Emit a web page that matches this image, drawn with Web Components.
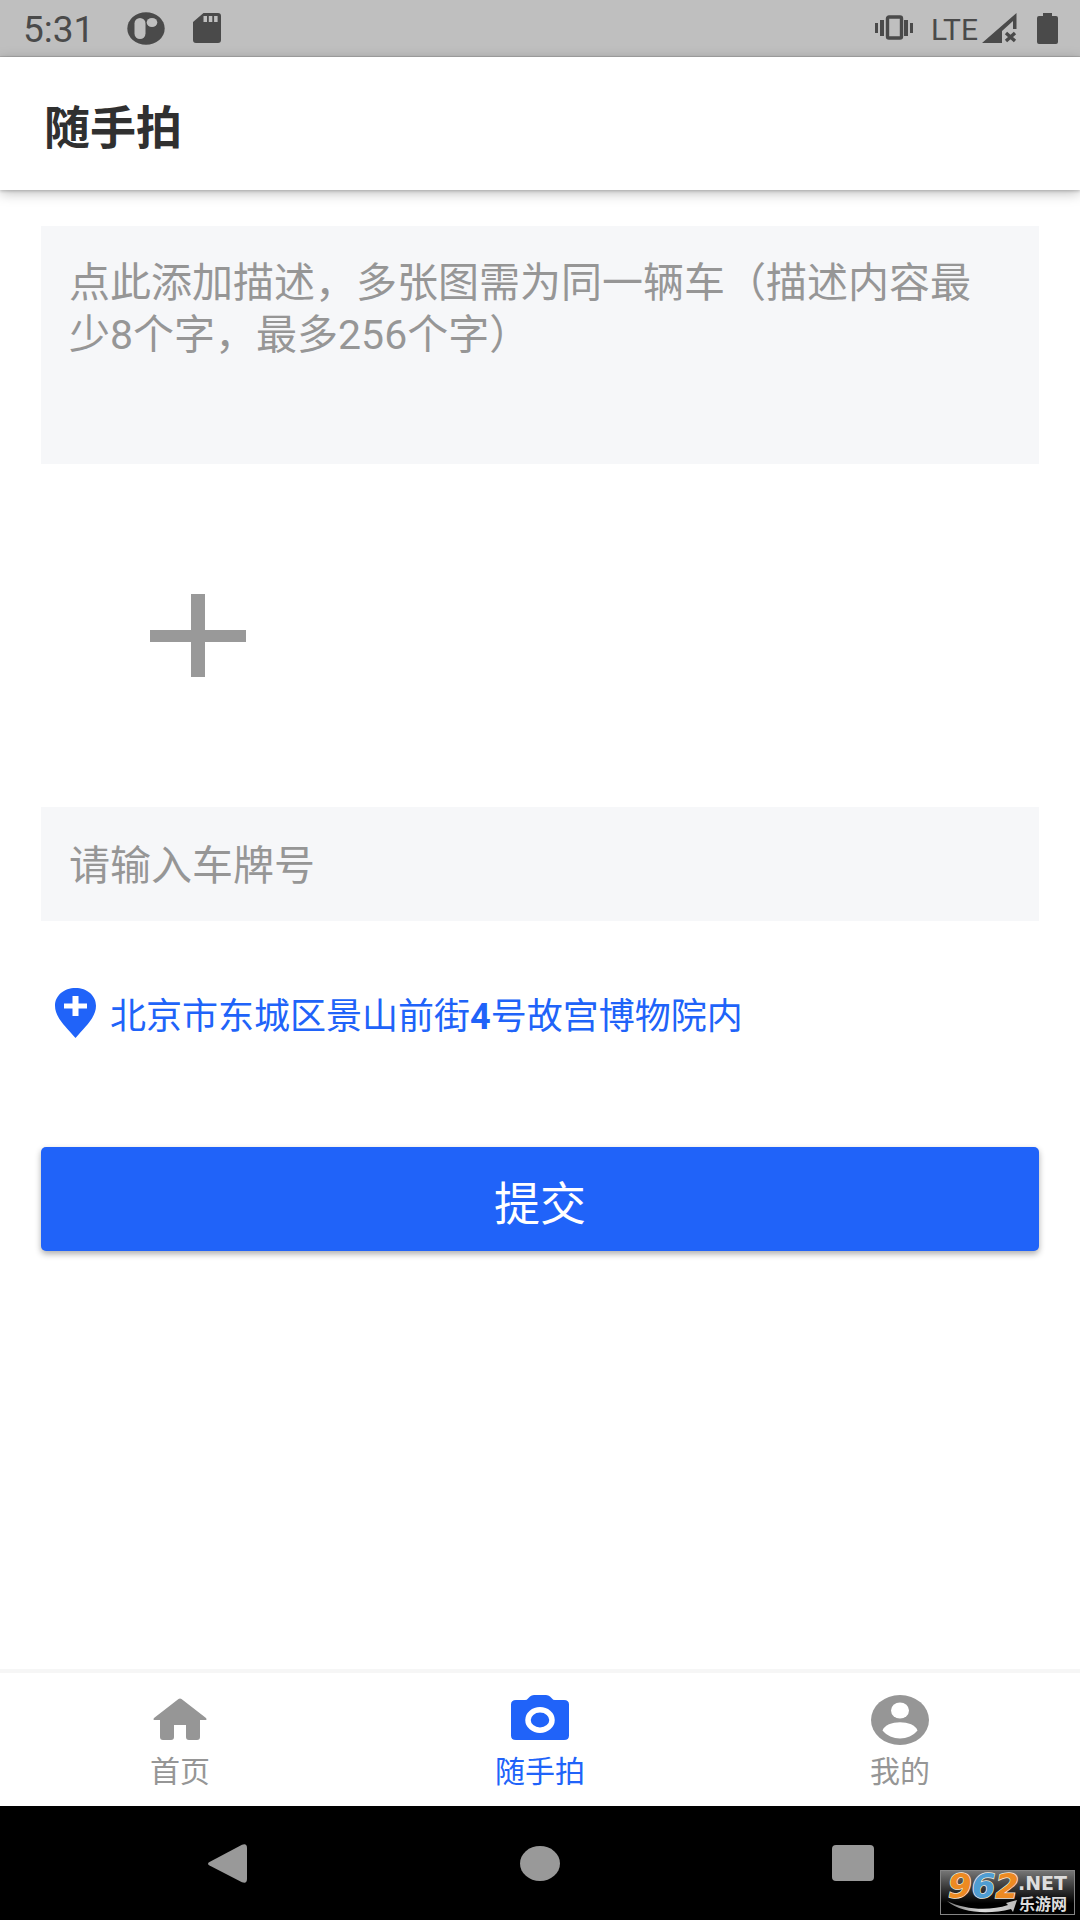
<!DOCTYPE html>
<html lang="zh-CN">
<head>
<meta charset="utf-8">
<meta name="viewport" content="width=device-width, initial-scale=1">
<title>随手拍</title>
<style>
  body { margin: 0; background: #fff; font-family: Roboto, "Noto Sans CJK SC", sans-serif; color: #303030; }
</style>
</head>
<body>
<snap-app></snap-app>

<script>
const base = `
  *, *::before { box-sizing: border-box; }
  svg { display: block; flex: none; }
  button, input, textarea { font: inherit; border: 0; border-radius: 0; margin: 0; padding: 0; outline-offset: -2px; }
  button { background: none; color: inherit; cursor: pointer; }
`;

function define(name, css, html) {
  const template = document.createElement('template');
  template.innerHTML = `<style>${base}${css}</style>${html}`;
  customElements.define(name, class extends HTMLElement {
    constructor() {
      super();
      this.attachShadow({ mode: 'open' }).append(template.content.cloneNode(true));
    }
    connectedCallback() {
      const field = this.shadowRoot.querySelector('[data-field]');
      if (field) {
        const text = this.getAttribute('placeholder');
        field.placeholder = text;
        field.setAttribute('aria-label', text);
      }
      const link = this.shadowRoot.querySelector('a');
      if (link) {
        link.href = this.getAttribute('href');
        if (this.hasAttribute('active')) link.setAttribute('aria-current', 'page');
      }
    }
  });
}

define('status-bar', `
  :host { display: flex; justify-content: space-between; align-items: center; height: 57px; padding: 0 22px 0 23px;
          background: #bfbfbf; border-bottom: 1px solid #adadad; color: #4a4a4a; fill: currentColor; }
  .group { display: flex; align-items: center; }
  .time, .net { padding-top: 4px; line-height: 52px; }
  .time { font-size: 37px; }
  .net { font-size: 30px; }
  .notices { gap: 28px; margin-left: 33px; }
  .net { margin: 0 4px 0 18px; }
  .battery { margin-left: 19px; }
`, `
  <div class="group">
    <span class="time">5:31</span>
    <div class="group notices">
      <svg width="38" height="33" viewBox="0 0 38 33" aria-hidden="true"><ellipse cx="19" cy="16.500" rx="18.700" ry="16.300"/><rect x="7.500" y="6" width="11" height="21" rx="5.500" fill="#bfbfbf"/><ellipse cx="25" cy="10.500" rx="5.300" ry="4.600" fill="#bfbfbf"/></svg>
      <svg width="28" height="30" viewBox="0 0 28 30" aria-hidden="true"><path fill-rule="evenodd" d="M10.500 0H25a3 3 0 0 1 3 3v24a3 3 0 0 1-3 3H3a3 3 0 0 1-3-3V9ZM10.500 3v6h3.500V3Zm5.300 0v6h3.500V3Zm5.300 0v6h3.500V3Z"/></svg>
    </div>
  </div>
  <div class="group">
    <svg width="38" height="26" viewBox="0 0 38 26" aria-hidden="true"><path d="M0 8h3v10H0ZM5 5h4v16H5ZM29 5h4v16h-4ZM35 8h3v10h-3Z"/><rect x="12.500" y="2" width="14" height="21" rx="1.500" fill="none" stroke="currentColor" stroke-width="3.400"/></svg>
    <span class="net">LTE</span>
    <svg width="36" height="31" viewBox="0 0 36 31" aria-hidden="true"><path d="M0 30 34.500 0v16H31V8L20 18v12Z"/><path d="m24 20 9 8m0-8-9 8" fill="none" stroke="currentColor" stroke-width="3.400"/></svg>
    <svg class="battery" width="21" height="31" viewBox="0 0 21 31" aria-hidden="true"><path d="M6 0h9v3h4a2 2 0 0 1 2 2v24a2 2 0 0 1-2 2H2a2 2 0 0 1-2-2V5a2 2 0 0 1 2-2h4Z"/></svg>
  </div>
`);

define('app-header', `
  :host { display: flex; align-items: center; height: 133px; padding: 8px 44px 0; background: #fff; z-index: 1;
          box-shadow: 0 3px 12px rgba(0,0,0,.26), 0 1px 3px rgba(0,0,0,.2); }
  h1 { margin: 0; font-size: 46px; line-height: 64px; font-weight: 700; }
`, `<h1><slot></slot></h1>`);

const fieldCss = `
  :host { display: block; }
  [data-field] { display: block; width: 100%; background: #f6f7f9; color: #303030; font-size: 41px; line-height: 52px; }
  ::placeholder { color: #969696; opacity: 1; }
`;
define('text-area-field', fieldCss + `
  textarea { height: 238px; padding: 31px 28px; resize: none; overflow: hidden; }
`, `<textarea data-field maxlength="256"></textarea>`);
define('text-line-field', fieldCss + `
  input { height: 114px; padding: 4px 28px 0; }
`, `<input data-field type="text">`);

define('photo-picker', `
  :host { display: block; }
  button { display: grid; place-items: center; width: 314px; height: 270px; }
`, `
  <button type="button" aria-label="+">
    <svg width="96" height="83" viewBox="0 0 96 83" aria-hidden="true"><path fill="#999" d="M41 0h14v36h41v12H55v35H41V48H0V36h41Z"/></svg>
  </button>
`);

define('place-link', `
  :host { display: block; color: #2063f9; }
  button { display: flex; align-items: center; gap: 14px; padding: 0 14px; font-size: 36px; line-height: 42px; text-align: left; }
  span { padding-top: 8px; }
  ::slotted(b) { font-weight: 700; }
`, `
  <button type="button">
    <svg width="41" height="50" viewBox="0 0 41 50" aria-hidden="true"><path fill="#2063f9" d="M20.500 0C9 0 0 7.600 0 17.800 0 29 10 38 20.500 50 31 38 41 29 41 17.800 41 7.600 32 0 20.500 0Z"/><path fill="#fff" d="M17.500 8h6v7.500H32v5h-8.500V28h-6v-7.500H9v-5h8.500Z"/></svg>
    <span><slot></slot></span>
  </button>
`);

define('submit-button', `
  :host { display: block; }
  button { width: 100%; height: 104px; border-radius: 5px; background: #2063f9; color: #fff; font-size: 46px; line-height: 64px;
           padding-top: 10px; box-shadow: 0 3px 6px rgba(0,0,0,.32); }
`, `<button type="submit"><slot></slot></button>`);

define('tab-item', `
  :host { display: block; flex: 1; color: #969696; }
  :host([active]) { color: #2063f9; }
  a { display: flex; flex-direction: column; align-items: center; gap: 5px; padding: 22px 0 12px; color: inherit; fill: currentColor; text-decoration: none;
      font-size: 30px; line-height: 44px; }
`, `<a><slot name="icon"></slot><span><slot></slot></span></a>`);

define('tab-bar', `
  :host { display: block; }
  nav { display: flex; border-top: 4px solid #f6f6f6; background: #fff; }
`, `<nav><slot></slot></nav>`);

define('site-mark', `
  :host { display: block; }
  svg { overflow: visible; }
`, `
  <svg width="135" height="45" viewBox="0 0 135 45">
    <defs>
      <linearGradient id="bg" x2="0" y2="1"><stop stop-color="#777"/><stop offset=".45" stop-color="#2e2e2e"/><stop offset=".75" stop-color="#000"/></linearGradient>
      <linearGradient id="silver"><stop stop-color="#777"/><stop offset=".5" stop-color="#ddd"/><stop offset="1" stop-color="#bbb"/></linearGradient>
    </defs>
    <rect x=".5" y=".5" width="134" height="44" fill="url(#bg)" stroke="#858585"/>
    <path fill="url(#silver)" d="M7 31C25 40 50 41 68 35L66 33 77 30 73 42 71 39C48 45 21 43 7 31Z"/>
    <text y="28" x="8" font-family="DejaVu Sans" font-weight="700" font-style="italic" font-size="34" stroke="#f3eadc" stroke-width="1.500" paint-order="stroke"><tspan fill="#ed8a22">9</tspan><tspan fill="#4f9dd2">6</tspan><tspan fill="#ed8a22">2</tspan></text>
    <text x="78" y="20" font-family="DejaVu Sans" font-weight="700" font-size="19" fill="#ddd">.NET</text>
    <text x="79" y="40" font-family="Noto Sans CJK SC" font-weight="700" font-size="16" fill="#ddd">乐游网</text>
  </svg>
`);

define('system-nav', `
  :host { display: flex; position: relative; height: 114px; padding: 0 71px; background: #000; fill: #999; }
  button { flex: 1; display: grid; place-items: center; }
  site-mark { position: absolute; right: 5px; bottom: 5px; }
`, `
  <button type="button" aria-label="返回"><svg width="39" height="39" viewBox="0 0 39 39"><path d="M1.500 18 34 .8Q39-1 39 4v31q0 5-5 3.200L1.500 21.500Q-1.500 19.700 1.500 18Z"/></svg></button>
  <button type="button" aria-label="主屏幕"><svg width="40" height="35" viewBox="0 0 40 35"><ellipse cx="20" cy="17.500" rx="20" ry="17.500"/></svg></button>
  <button type="button" aria-label="最近"><svg width="42" height="36" viewBox="0 0 42 36"><rect width="42" height="36" rx="4"/></svg></button>
  <site-mark></site-mark>
`);

define('snap-app', `
  :host { display: flex; flex-direction: column; min-height: 100vh; }
  form { flex: 1; padding: 36px 41px; }
  photo-picker { margin: 36px 0 37px; }
  place-link { margin: 67px 0 109px; }
`, `
  <status-bar></status-bar>
  <app-header>随手拍</app-header>
  <form>
    <text-area-field placeholder="点此添加描述，多张图需为同一辆车（描述内容最少8个字，最多256个字）"></text-area-field>
    <photo-picker></photo-picker>
    <text-line-field placeholder="请输入车牌号"></text-line-field>
    <place-link>北京市东城区景山前街<b>4</b>号故宫博物院内</place-link>
    <submit-button>提交</submit-button>
  </form>
  <tab-bar>
    <tab-item href="#home">
      <svg slot="icon" width="58" height="50" viewBox="0 0 58 50" aria-hidden="true"><path d="M27.500 4q1.500-1 3 0L55 23q1.500 2-1 2H49v17q0 3-3 3H38q-3 0-3-3V30H23V42q0 3-3 3H12q-3 0-3-3V25H4q-2.500 0-1-2Z"/></svg>首页
    </tab-item>
    <tab-item href="#snap" active>
      <svg slot="icon" width="58" height="50" viewBox="0 0 58 50" aria-hidden="true"><path d="M5 5H14q2 0 3-1.500L19 1.500Q20.500 0 23 0H35q2.500 0 4 1.500L41 3.500Q42 5 44 5H53q5 0 5 4.500V40.500Q58 45 53 45H5Q0 45 0 40.500V9.500Q0 5 5 5Z"/><ellipse cx="29" cy="25" rx="12" ry="10.200" fill="none" stroke="#fff" stroke-width="5.500"/></svg>随手拍
    </tab-item>
    <tab-item href="#mine">
      <svg slot="icon" width="58" height="50" viewBox="0 0 58 50" aria-hidden="true"><ellipse cx="29" cy="25" rx="29" ry="25"/><ellipse cx="29" cy="15.500" rx="9" ry="8" fill="#fff"/><path fill="#fff" d="M11.500 35.500C15 24.500 43 24.500 46.500 35.500 38 46 20 46 11.500 35.500Z"/></svg>我的
    </tab-item>
  </tab-bar>
  <system-nav></system-nav>
`);
</script>
</body>
</html>
